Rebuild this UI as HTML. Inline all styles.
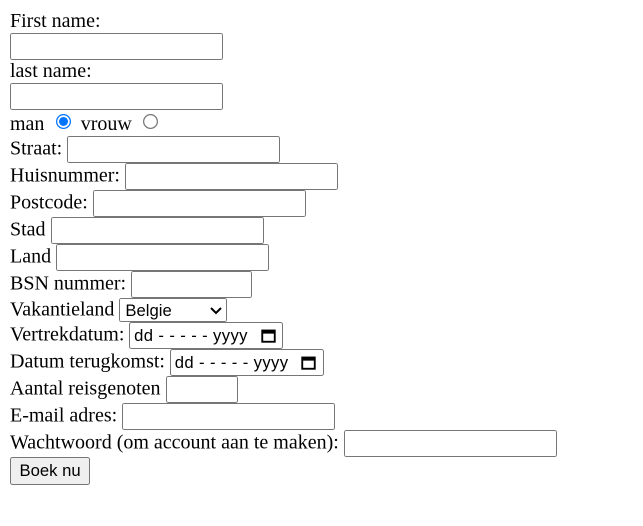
<!DOCTYPE html>
<html><head><meta charset="utf-8">
<style>
html{background:#fff}
body{margin:8px;zoom:1.25;font-family:"Liberation Serif",serif;font-size:16px;color:#000}
input,select,button{font-family:"Liberation Sans",sans-serif;font-size:13.333px}
input[type=text],input[type=email],input[type=password]{width:170.4px;height:21.6px;box-sizing:border-box}
#bsn{width:97px}
#aantal{width:58px}
select{height:19.5px;width:86px}
.date{display:inline-block;box-sizing:border-box;width:123px;height:21.6px;border:1px solid #767676;border-radius:2px;font-family:"Liberation Sans",sans-serif;font-size:13.333px;padding:2px 3px;position:relative;line-height:16px;letter-spacing:0.3px}
.date svg{position:absolute;right:5px;top:4px}
button{height:22.4px;padding:1px 6px}
</style></head><body>
<form>
First name:<br>
<input type="text"><br>
last name:<br>
<input type="text"><br>
man <input type="radio" name="g" checked> vrouw <input type="radio" name="g"><br>
Straat: <input type="text"><br>
Huisnummer: <input type="text"><br>
Postcode: <input type="text"><br>
Stad <input type="text"><br>
Land <input type="text"><br>
BSN nummer: <input type="text" id="bsn"><br>
Vakantieland <select><option>Belgie</option></select><br>
Vertrekdatum: <span class="date">dd - - - - - yyyy<svg width="12" height="12" viewBox="0 0 12 12"><rect x="1" y="2" width="10" height="9" fill="none" stroke="#000" stroke-width="1.5"/><rect x="1" y="2" width="10" height="2.5" fill="#000"/></svg></span><br>
Datum terugkomst: <span class="date">dd - - - - - yyyy<svg width="12" height="12" viewBox="0 0 12 12"><rect x="1" y="2" width="10" height="9" fill="none" stroke="#000" stroke-width="1.5"/><rect x="1" y="2" width="10" height="2.5" fill="#000"/></svg></span><br>
Aantal reisgenoten <input type="text" id="aantal"><br>
E-mail adres: <input type="email"><br>
Wachtwoord (om account aan te maken): <input type="password"><br>
<button type="button">Boek nu</button>
</form>
</body></html>
